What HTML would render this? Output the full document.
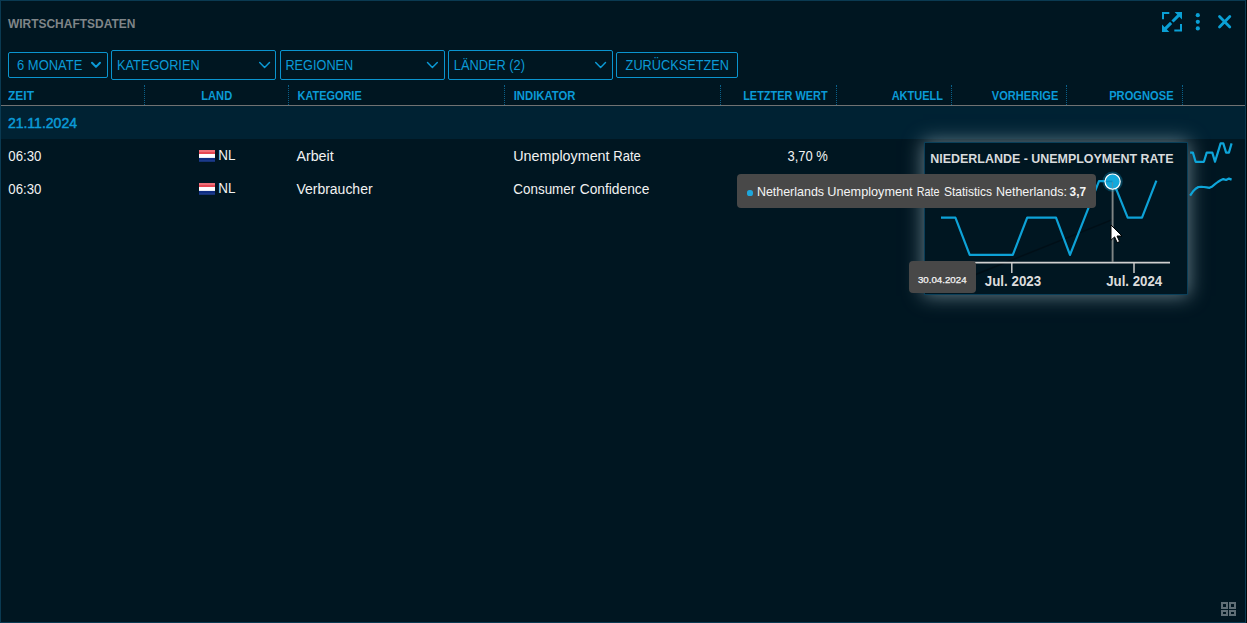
<!DOCTYPE html>
<html lang="de"><head><meta charset="utf-8"><title>Wirtschaftsdaten</title>
<style>
html,body{margin:0;padding:0;}
body{width:1247px;height:623px;overflow:hidden;background:#00080c;position:relative;font-family:"Liberation Sans",sans-serif;}
.panel{position:absolute;left:0;top:0;width:1244px;height:621px;border:1px solid #0a3a52;background:#001621;}
.t{position:absolute;white-space:pre;transform-origin:0 50%;display:block;height:20px;}
.abs{position:absolute;}
.btn{position:absolute;box-sizing:border-box;border:1px solid #0a94ce;border-radius:2px;}
.vsep{position:absolute;top:85px;height:20px;width:0;border-left:1px dotted #0a618a;}
.hline{position:absolute;left:1px;top:105px;width:1244px;height:1px;background:#707272;}
.daterow{position:absolute;left:1px;top:106px;width:1244px;height:33px;background:#002233;}
.popup{position:absolute;left:924px;top:142px;width:264px;height:153px;box-sizing:border-box;border:1px solid #0a3f59;background:#001621;box-shadow:0 0 18px 1px rgba(125,150,160,0.8);}
.tip{position:absolute;background:#484848;border-radius:4px;}
svg{position:absolute;overflow:visible;}

</style></head><body>
<div class="panel"></div>
<div class="hline"></div>
<div class="daterow"></div>
<div class="vsep" style="left:144px"></div>
<div class="vsep" style="left:288px"></div>
<div class="vsep" style="left:504px"></div>
<div class="vsep" style="left:720px"></div>
<div class="vsep" style="left:836px"></div>
<div class="vsep" style="left:951px"></div>
<div class="vsep" style="left:1066px"></div>
<div class="vsep" style="left:1182px"></div>

<div class="btn" style="left:8px;top:52px;width:100px;height:26px"></div>
<div class="btn" style="left:111px;top:50px;width:165px;height:30px"></div>
<div class="btn" style="left:280px;top:50px;width:165px;height:30px"></div>
<div class="btn" style="left:448px;top:50px;width:165px;height:30px"></div>
<div class="btn" style="left:616px;top:52px;width:122px;height:26px"></div>

<svg class="abs" style="left:0;top:0" width="1247" height="623" viewBox="0 0 1247 623">
  <!-- chevrons -->
  <g fill="none" stroke="#0b9ad6" stroke-width="1.45" stroke-linecap="round" stroke-linejoin="round">
    <path d="M92 62.7 L96 66.9 L100 62.7" stroke-width="2"/>
    <path d="M259.7 62.6 L264.6 67.6 L269.5 62.6"/>
    <path d="M427.5 62.6 L432.4 67.6 L437.3 62.6"/>
    <path d="M595.7 62.6 L600.6 67.6 L605.5 62.6"/>
  </g>
  <!-- expand icon -->
  <g fill="none" stroke="#0aa0d5" stroke-width="2">
    <path d="M1163 19.3 V13 H1169.3"/>
    <path d="M1174.3 30.6 H1181 V24"/>
    <path d="M1164.6 29.4 L1171.1 22.9 M1172.5 21.5 L1179.4 14.6" stroke-width="3"/>
  </g>
  <g fill="#0aa0d5">
    <path d="M1182 12 H1174.6 L1182 19.4 Z"/>
    <path d="M1162 32 V24.4 L1169.4 32 Z"/>
    <circle cx="1197.8" cy="15.2" r="2.1"/>
    <circle cx="1197.8" cy="21.8" r="2.1"/>
    <circle cx="1197.8" cy="28.4" r="2.1"/>
  </g>
  <path d="M1219.5 16.6 L1229.8 26.9 M1229.8 16.6 L1219.5 26.9" stroke="#0aa0d5" stroke-width="2.8" stroke-linecap="round" fill="none"/>
  <!-- flags -->
  <g>
    <rect x="199" y="150" width="16" height="2" fill="#ee6f78"/>
    <rect x="199" y="152" width="16" height="2" fill="#e64752"/>
    <rect x="199" y="154" width="16" height="4" fill="#ffffff"/>
    <rect x="199" y="157.6" width="16" height="0.6" fill="#c9cfe6"/>
    <rect x="199" y="158" width="16" height="2" fill="#0e2d82"/>
    <rect x="199" y="160" width="16" height="1.8" fill="#1b3a8a"/>
    <rect x="199" y="183" width="16" height="2" fill="#ee6f78"/>
    <rect x="199" y="185" width="16" height="2" fill="#e64752"/>
    <rect x="199" y="187" width="16" height="4" fill="#ffffff"/>
    <rect x="199" y="190.6" width="16" height="0.6" fill="#c9cfe6"/>
    <rect x="199" y="191" width="16" height="2" fill="#0e2d82"/>
    <rect x="199" y="193" width="16" height="1.8" fill="#1b3a8a"/>
  </g>
  <!-- grid icon -->
  <g fill="none" stroke="#5f6e76" stroke-width="2">
    <rect x="1222" y="603" width="5" height="5"/>
    <rect x="1230" y="603" width="5" height="5"/>
    <rect x="1222" y="611" width="5" height="4"/>
    <rect x="1230" y="611" width="5" height="4"/>
  </g>
</svg>

<div class="popup"></div>
<svg class="abs" style="left:0;top:0" width="1247" height="623" viewBox="0 0 1247 623">
  <!-- sparklines -->
  <g fill="none" stroke="#0ea5d9" stroke-width="2.2" stroke-linejoin="round" stroke-linecap="butt">
    <path d="M1190.1 152.6 L1192.9 152.6 L1195.6 161.8 L1198.4 161.8 L1201.2 161.8 L1203.9 161.8 L1206.7 152.6 L1209.5 152.6 L1212.3 152.6 L1215.0 161.8 L1217.8 152.6 L1220.6 143.4 L1223.3 143.4 L1226.1 152.6 L1228.9 152.6 L1231.6 143.4"/>
    <path d="M1190.1 195.7 L1192.9 191.6 L1195.6 188.8 L1198.4 187.0 L1201.2 186.8 L1203.9 187.0 L1206.7 187.4 L1209.5 187.8 L1212.3 186.4 L1215.0 184.2 L1217.8 182.0 L1220.6 180.3 L1223.3 179.1 L1226.1 180.0 L1228.9 178.6 L1231.6 179.6"/>
  </g>
  <path d="M975.7 274.5 L1112.4 219.6" stroke="#000a10" stroke-width="1.5" opacity="0.55"/>
  <path d="M941 262.6 H1170" stroke="#d0d0d0" stroke-width="1.6"/>
  <path d="M1011.8 263 V273 M1134 263 V273" stroke="#c8c8c8" stroke-width="1.5"/>
  <path d="M1112.6 189 V262" stroke="#7f8585" stroke-width="1.9"/>
  <path d="M941 217.7 L955.4 217.7 L969.7 254.9 L1012.8 254.9 L1027.2 217.7 L1056 217.7 L1070 254.9 L1099 181.2 L1113 181.2 L1127.7 217.7 L1142 217.7 L1156.4 180.6" fill="none" stroke="#0da2d7" stroke-width="2.2" stroke-linejoin="round"/>
  <circle cx="1112.6" cy="181.6" r="10.2" fill="#0ea5d9" opacity="0.3"/>
  <circle cx="1112.6" cy="181.6" r="7.6" fill="#12a9dc" stroke="#ffffff" stroke-width="1.2"/>
  <path d="M1112.5 182 V188.4" stroke="#5a8fa6" stroke-width="1.3" opacity="0.8"/>
  <path d="M1105.8 181.4 H1112.4" stroke="#0a86b6" stroke-width="1.6" opacity="0.7"/>
</svg>
<div class="tip" style="left:737px;top:174px;width:358.5px;height:34px"></div>
<div class="abs" style="left:746.8px;top:189.5px;width:6px;height:6px;border-radius:2.6px;background:#1ea7dc"></div>
<div class="tip" style="left:908.5px;top:261px;width:67px;height:32px"></div>
<svg class="abs" style="left:1110px;top:224px" width="14" height="20" viewBox="0 0 14 20">
  <path d="M1 1 V16.2 L4.6 12.9 L7.2 18.6 L9.6 17.6 L7 12 H12 Z" fill="#ffffff" stroke="#000000" stroke-width="1" stroke-linejoin="round"/>
</svg>

<span id="t_title" class="t" style="left:7px;top:13.63px;font:bold 12.6px/20px 'Liberation Sans',sans-serif;color:#7f8588;transform:translateX(0.90px) scaleX(0.9504)">WIRTSCHAFTSDATEN</span>
<span id="t_b1" class="t" style="left:17px;top:55.15px;font:normal 14px/20px 'Liberation Sans',sans-serif;color:#0b9ad6;transform:translateX(0.05px) scaleX(0.9258)">6 MONATE</span>
<span id="t_b2" class="t" style="left:117px;top:55.15px;font:normal 14px/20px 'Liberation Sans',sans-serif;color:#0b9ad6;transform:translateX(0.08px) scaleX(0.9091)">KATEGORIEN</span>
<span id="t_b3" class="t" style="left:285px;top:55.15px;font:normal 14px/20px 'Liberation Sans',sans-serif;color:#0b9ad6;transform:translateX(0.38px) scaleX(0.9093)">REGIONEN</span>
<span id="t_b4" class="t" style="left:453px;top:55.15px;font:normal 14px/20px 'Liberation Sans',sans-serif;color:#0b9ad6;transform:translateX(0.78px) scaleX(0.9148)">LÄNDER (2)</span>
<span id="t_b5" class="t" style="left:625px;top:55.15px;font:normal 14px/20px 'Liberation Sans',sans-serif;color:#0b9ad6;transform:translateX(0.62px) scaleX(0.9102)">ZURÜCKSETZEN</span>
<span id="t_h1" class="t" style="left:8px;top:85.63px;font:bold 12.6px/20px 'Liberation Sans',sans-serif;color:#0b9ad6;transform:translateX(0.00px) scaleX(0.9513)">ZEIT</span>
<span id="t_h2" class="t" style="left:201px;top:85.63px;font:bold 12.6px/20px 'Liberation Sans',sans-serif;color:#0b9ad6;transform:translateX(0.28px) scaleX(0.8841)">LAND</span>
<span id="t_h3" class="t" style="left:297px;top:85.63px;font:bold 12.6px/20px 'Liberation Sans',sans-serif;color:#0b9ad6;transform:translateX(0.49px) scaleX(0.8681)">KATEGORIE</span>
<span id="t_h4" class="t" style="left:513px;top:85.63px;font:bold 12.6px/20px 'Liberation Sans',sans-serif;color:#0b9ad6;transform:translateX(0.66px) scaleX(0.8997)">INDIKATOR</span>
<span id="t_h5" class="t" style="left:743px;top:85.63px;font:bold 12.6px/20px 'Liberation Sans',sans-serif;color:#0b9ad6;transform:translateX(0.19px) scaleX(0.8683)">LETZTER WERT</span>
<span id="t_h6" class="t" style="left:891px;top:85.63px;font:bold 12.6px/20px 'Liberation Sans',sans-serif;color:#0b9ad6;transform:translateX(0.68px) scaleX(0.8726)">AKTUELL</span>
<span id="t_h7" class="t" style="left:991px;top:85.63px;font:bold 12.6px/20px 'Liberation Sans',sans-serif;color:#0b9ad6;transform:translateX(0.84px) scaleX(0.8804)">VORHERIGE</span>
<span id="t_h8" class="t" style="left:1109px;top:85.63px;font:bold 12.6px/20px 'Liberation Sans',sans-serif;color:#0b9ad6;transform:translateX(0.17px) scaleX(0.8864)">PROGNOSE</span>
<span id="t_date" class="t" style="-webkit-text-stroke:0.5px #0b9ad6;left:7px;top:113.15px;font:normal 14px/20px 'Liberation Sans',sans-serif;color:#0b9ad6;transform:translateX(0.90px) scaleX(1.0005)">21.11.2024</span>
<span id="t_r1a" class="t" style="left:8px;top:146.15px;font:normal 14px/20px 'Liberation Sans',sans-serif;color:#f2f2f2;transform:translateX(0.34px) scaleX(0.9431)">06:30</span>
<span id="t_r1b" class="t" style="left:218px;top:145.15px;font:normal 14px/20px 'Liberation Sans',sans-serif;color:#f2f2f2;transform:translateX(0.22px) scaleX(0.9608)">NL</span>
<span id="t_r1c" class="t" style="left:296px;top:146.15px;font:normal 14px/20px 'Liberation Sans',sans-serif;color:#f2f2f2;transform:translateX(0.40px) scaleX(1.0183)">Arbeit</span>
<span id="t_r1d" class="t" style="left:513px;top:146.15px;font:normal 14px/20px 'Liberation Sans',sans-serif;color:#f2f2f2;transform:translateX(0.23px) scaleX(1.0230)">Unemployment</span>
<span id="t_r1d2" class="t" style="left:613px;top:146.15px;font:normal 14px/20px 'Liberation Sans',sans-serif;color:#f2f2f2;transform:translateX(0.26px) scaleX(0.9327)">Rate</span>
<span id="t_r1e" class="t" style="left:787px;top:146.15px;font:normal 14px/20px 'Liberation Sans',sans-serif;color:#f2f2f2;transform:translateX(0.45px) scaleX(0.9268)">3,70 %</span>
<span id="t_r2a" class="t" style="left:8px;top:179.15px;font:normal 14px/20px 'Liberation Sans',sans-serif;color:#f2f2f2;transform:translateX(0.34px) scaleX(0.9431)">06:30</span>
<span id="t_r2b" class="t" style="left:218px;top:178.15px;font:normal 14px/20px 'Liberation Sans',sans-serif;color:#f2f2f2;transform:translateX(0.22px) scaleX(0.9608)">NL</span>
<span id="t_r2c" class="t" style="left:296px;top:179.15px;font:normal 14px/20px 'Liberation Sans',sans-serif;color:#f2f2f2;transform:translateX(0.40px) scaleX(0.9989)">Verbraucher</span>
<span id="t_r2d" class="t" style="left:513px;top:179.15px;font:normal 14px/20px 'Liberation Sans',sans-serif;color:#f2f2f2;transform:translateX(0.33px) scaleX(0.9577)">Consumer</span>
<span id="t_r2d2" class="t" style="left:579px;top:179.15px;font:normal 14px/20px 'Liberation Sans',sans-serif;color:#f2f2f2;transform:translateX(0.71px) scaleX(0.9835)">Confidence</span>
<span id="t_ptitle" class="t" style="left:930px;top:148.56px;font:bold 12.8px/20px 'Liberation Sans',sans-serif;color:#d8dbdd;transform:translateX(0.29px) scaleX(0.9728)">NIEDERLANDE - UNEMPLOYMENT RATE</span>
<span id="t_tip1" class="t" style="left:756px;top:182.00px;font:normal 13px/20px 'Liberation Sans',sans-serif;color:#f4f4f4;transform:translateX(0.90px) scaleX(0.9577)">Netherlands</span>
<span id="t_tip2" class="t" style="left:827px;top:182.00px;font:normal 13px/20px 'Liberation Sans',sans-serif;color:#f4f4f4;transform:translateX(0.35px) scaleX(0.9744)">Unemployment</span>
<span id="t_tip3" class="t" style="left:916px;top:182.00px;font:normal 13px/20px 'Liberation Sans',sans-serif;color:#f4f4f4;transform:translateX(0.74px) scaleX(0.8267)">Rate</span>
<span id="t_tip4" class="t" style="left:943px;top:182.00px;font:normal 13px/20px 'Liberation Sans',sans-serif;color:#f4f4f4;transform:translateX(0.96px) scaleX(0.9240)">Statistics</span>
<span id="t_tip5" class="t" style="left:995px;top:182.00px;font:normal 13px/20px 'Liberation Sans',sans-serif;color:#f4f4f4;transform:translateX(0.90px) scaleX(0.9633)">Netherlands:</span>
<span id="t_tipv" class="t" style="left:1069px;top:182.00px;font:bold 13px/20px 'Liberation Sans',sans-serif;color:#f4f4f4;transform:translateX(0.56px) scaleX(0.9087)">3,7</span>
<span id="t_dtip" class="t" style="-webkit-text-stroke:0.25px #f4f4f4;left:917px;top:269.88px;font:normal 9px/20px 'Liberation Sans',sans-serif;color:#f4f4f4;transform:translateX(0.96px) scaleX(1.0788)">30.04.2024</span>
<span id="t_ax1" class="t" style="left:984px;top:270.85px;font:bold 14px/20px 'Liberation Sans',sans-serif;color:#dcdcdc;transform:translateX(0.80px) scaleX(0.9532)">Jul. 2023</span>
<span id="t_ax2" class="t" style="left:1106px;top:270.85px;font:bold 14px/20px 'Liberation Sans',sans-serif;color:#dcdcdc;transform:translateX(0.20px) scaleX(0.9470)">Jul. 2024</span>
</body></html>
